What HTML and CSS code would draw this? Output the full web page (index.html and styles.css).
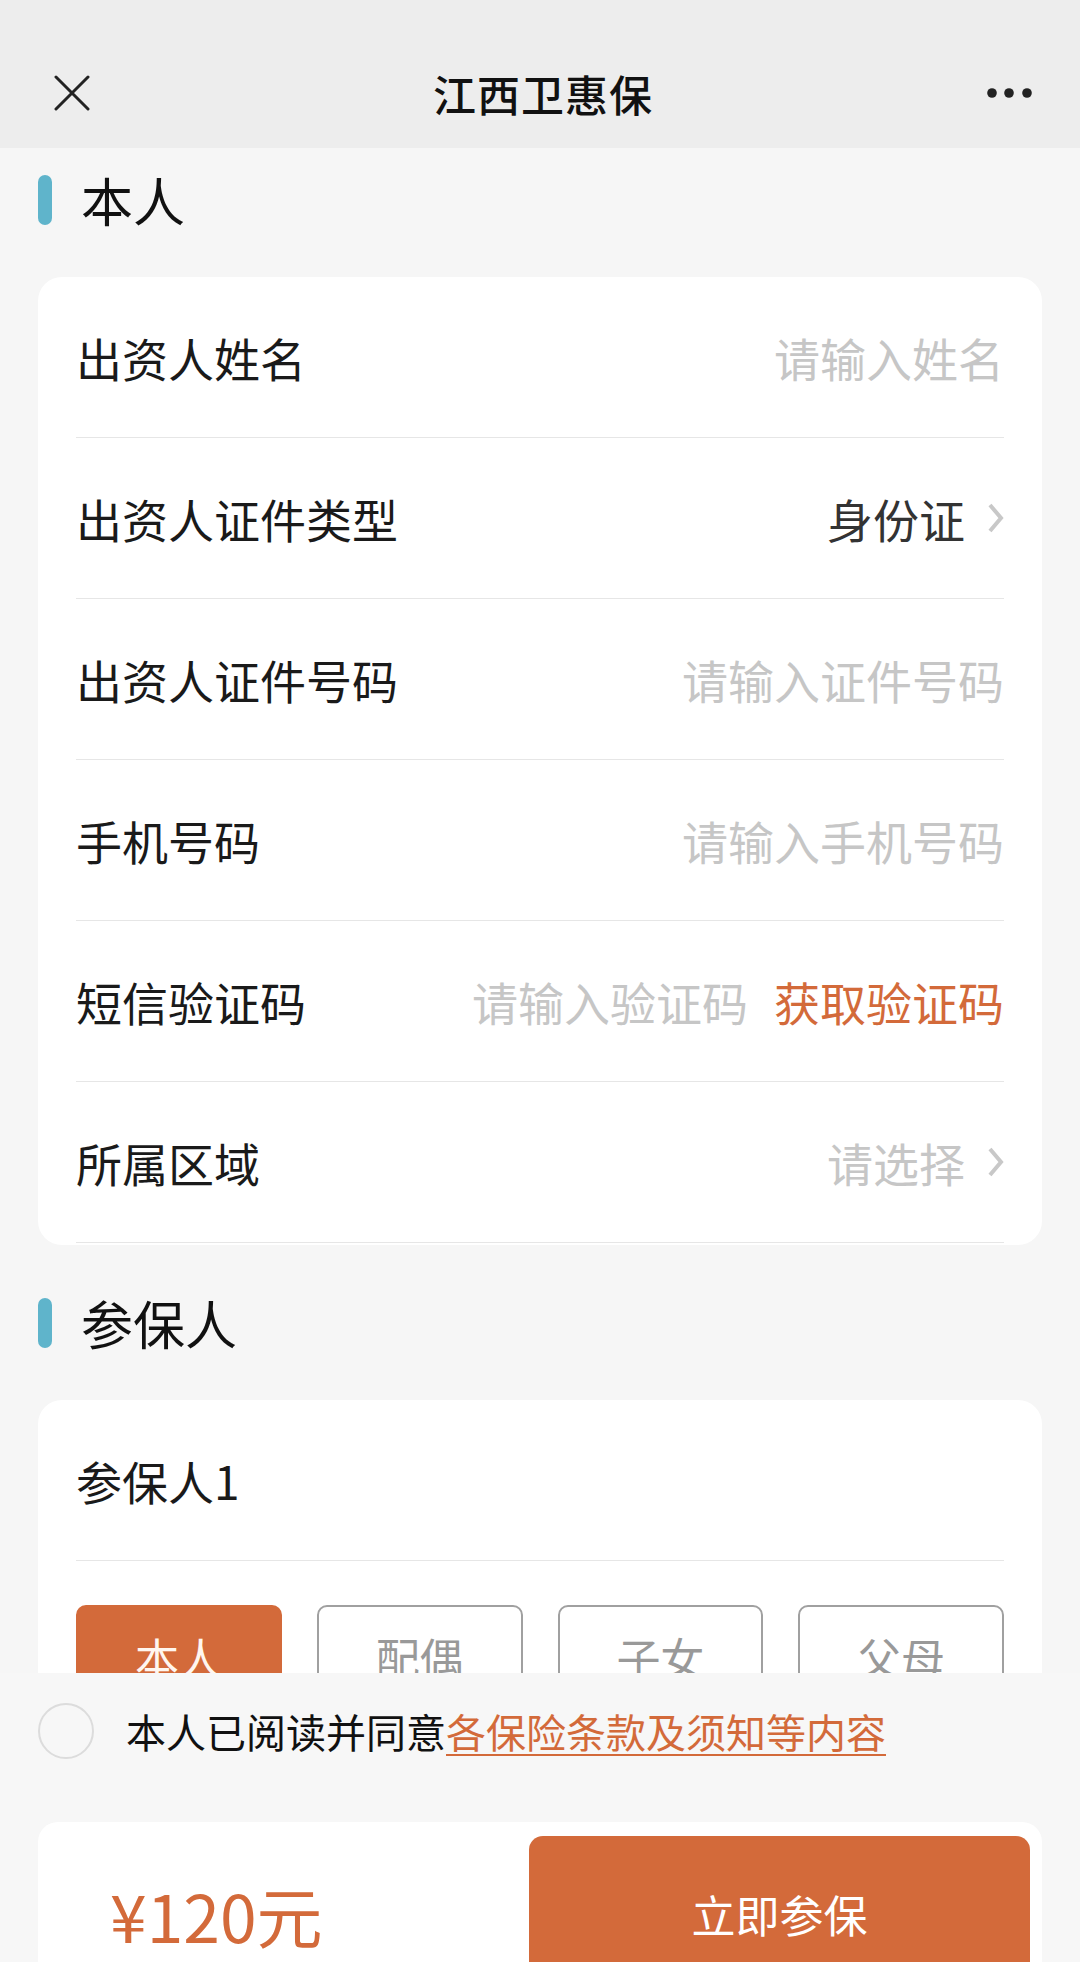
FILE: index.html
```html
<!DOCTYPE html>
<html lang="zh-CN">
<head>
    <meta charset="UTF-8">
    <title>江西卫惠保</title>
    <link rel="stylesheet" href="styles.css">
</head>
<body>
<div class="page">
    <header class="nav">
        <span class="nav-close">
            <svg width="36" height="36" viewBox="0 0 36 36"><path d="M2 2L34 34M34 2L2 34" stroke="#222" stroke-width="3" stroke-linecap="round"/></svg>
        </span>
        <h1 class="nav-title">江西卫惠保</h1>
        <span class="nav-more">
            <svg width="46" height="12" viewBox="0 0 46 12"><circle cx="6" cy="6" r="4.8" fill="#222"/><circle cx="23" cy="6" r="4.8" fill="#222"/><circle cx="41" cy="6" r="4.8" fill="#222"/></svg>
        </span>
    </header>

    <div class="content">
        <div class="section-title"><i class="bar"></i>本人</div>
        <div class="card">
            <div class="row">
                <span class="label">出资人姓名</span>
                <span class="hint">请输入姓名</span>
            </div>
            <div class="row">
                <span class="label">出资人证件类型</span>
                <span class="value">身份证<svg class="arrow" width="17" height="32" viewBox="0 0 17 32"><polyline points="3,3 14,16 3,29" fill="none" stroke="#c8c8c8" stroke-width="4"/></svg></span>
            </div>
            <div class="row">
                <span class="label">出资人证件号码</span>
                <span class="hint">请输入证件号码</span>
            </div>
            <div class="row">
                <span class="label">手机号码</span>
                <span class="hint">请输入手机号码</span>
            </div>
            <div class="row">
                <span class="label">短信验证码</span>
                <span class="code">
                    <span class="hint">请输入验证码</span>
                    <a class="get-code">获取验证码</a>
                </span>
            </div>
            <div class="row">
                <span class="label">所属区域</span>
                <span class="value hint">请选择<svg class="arrow" width="17" height="32" viewBox="0 0 17 32"><polyline points="3,3 14,16 3,29" fill="none" stroke="#c8c8c8" stroke-width="4"/></svg></span>
            </div>
        </div>

        <div class="section-title next"><i class="bar"></i>参保人</div>
        <div class="card">
            <div class="row">
                <span class="label">参保人1</span>
            </div>
            <ul class="relations">
                <li class="cur">本人</li>
                <li>配偶</li>
                <li>子女</li>
                <li>父母</li>
            </ul>
        </div>
    </div>

    <div class="footer">
        <div class="agree">
            <span class="check"></span>
            <p>本人已阅读并同意<a>各保险条款及须知等内容</a></p>
        </div>
        <div class="paybar">
            <div class="price">¥120元</div>
            <a class="pay-btn">立即参保</a>
        </div>
    </div>
</div>
</body>
</html>
```

FILE: styles.css
```css
*{
    margin:0;
    padding:0;
    box-sizing: border-box;
}
ul,ol{
    list-style: none;
}
html,body{
    height:100%;
}
body{
    background:#f6f6f6;
    font-family: "Noto Sans CJK SC", "Noto Sans", sans-serif;
    color:#1a1a1a;
}
.page{
    height:100vh;
    display:flex;
    flex-direction: column;
    overflow: hidden;
}

/* 顶部导航 */
.nav{
    height:148px;
    flex-shrink: 0;
    background:#ededed;
    padding:38px 48px 0 54px;
    display:grid;
    grid-template-columns: 1fr auto 1fr;
    align-items: center;
}
.nav-close{
    display:flex;
    justify-self: start;
}
.nav-title{
    font-size:43px;
    font-weight:500;
    color:#111;
    letter-spacing: 1px;
}
.nav-more{
    display:flex;
    justify-self: end;
}

/* 内容区 */
.content{
    flex:1;
    overflow: hidden;
    padding:0 38px;
}
.section-title{
    margin-top:26px;
    height:52px;
    display:flex;
    align-items: center;
    font-size:52px;
    line-height:52px;
    color:#111;
}
.section-title.next{
    margin-top:52px;
}
.section-title .bar{
    width:14px;
    height:50px;
    border-radius:7px;
    background:#5fb4cb;
    margin-right:29px;
}
.card{
    margin-top:51px;
    background:#fff;
    border-radius:24px;
    padding:0 38px 2px;
}
.row{
    height:161px;
    border-bottom:1px solid #e6e6e6;
    display:flex;
    align-items: center;
    justify-content: space-between;
    font-size:46px;
}
.label{
    color:#1a1a1a;
}
.hint{
    color:#c6c6c6;
}
.value{
    color:#333;
    display:flex;
    align-items: center;
}
.value.hint{
    color:#c6c6c6;
}
.arrow{
    margin-left:22px;
}
.code{
    display:flex;
    align-items: center;
}
.get-code{
    color:#d36a3a;
    margin-left:26px;
}

/* 关系选择 */
.relations{
    padding-top:44px;
    display:grid;
    grid-template-columns: repeat(4, 1fr);
    gap:35px;
}
.relations li{
    height:104px;
    border:2px solid #a0a0a0;
    border-radius:10px;
    display:flex;
    align-items: center;
    justify-content: center;
    font-size:44px;
    color:#999;
}
.relations li.cur{
    background:#d36a3a;
    border-color:#d36a3a;
    color:#fff6ef;
}

/* 底部 */
.footer{
    height:289px;
    flex-shrink: 0;
    background:#f7f7f7;
    display:flex;
    flex-direction: column;
}
.agree{
    padding:29px 38px 0;
    display:flex;
    align-items: center;
}
.check{
    width:56px;
    height:56px;
    border:2px solid #dcdcdc;
    border-radius:50%;
    flex-shrink: 0;
}
.agree p{
    margin-left:32px;
    font-size:40px;
    color:#111;
}
.agree a{
    color:#d36a3a;
    text-decoration: underline;
    text-underline-offset: 6px;
    text-decoration-thickness: 2px;
}
.paybar{
    margin:62px 38px 0;
    flex:1;
    background:#fff;
    border-radius:20px 20px 0 0;
    padding:14px 12px 0 72px;
    display:flex;
    align-items: flex-start;
    overflow: hidden;
}
.price{
    flex:1;
    height:156px;
    display:flex;
    align-items: center;
    font-size:66px;
    color:#d36a3a;
}
.pay-btn{
    width:501px;
    height:156px;
    flex-shrink: 0;
    background:#d36a3a;
    border-radius:14px;
    display:flex;
    align-items: center;
    justify-content: center;
    font-size:44px;
    color:#fff;
}
```
